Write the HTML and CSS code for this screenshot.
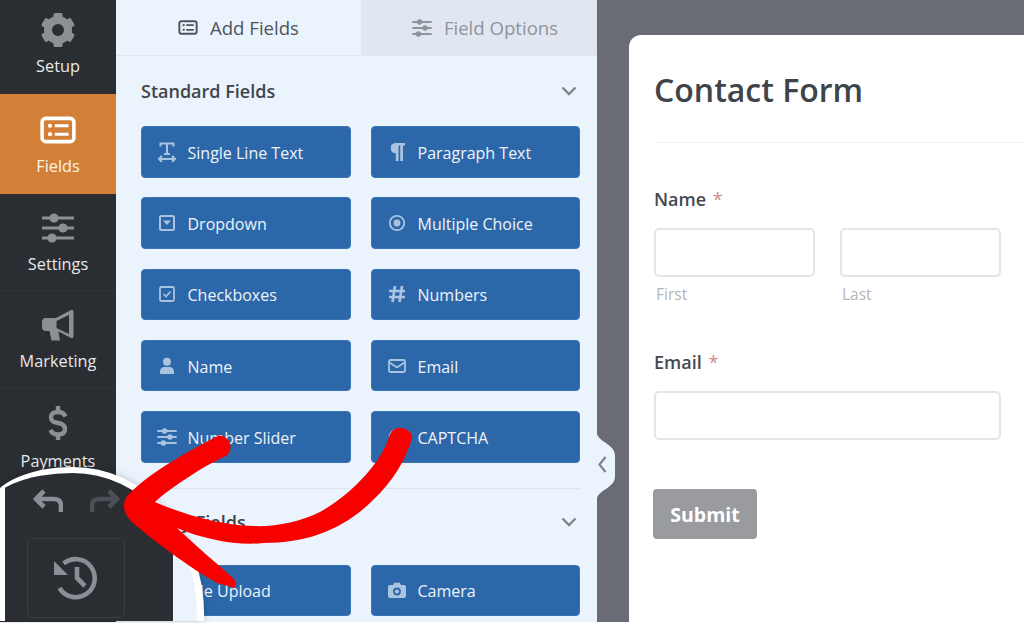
FILE: index.html
```html
<!DOCTYPE html>
<html lang="en">
<head>
  <meta charset="UTF-8">
  <meta name="viewport" content="width=device-width, initial-scale=1.0">
  <title>Contact Form - Fields</title>
  <link rel="stylesheet" href="styles.css">
</head>
<body>

<svg class="defs" width="0" height="0" aria-hidden="true">
  <symbol id="i-fields" viewBox="0 0 34 26">
    <rect x="2" y="2" width="30" height="22" rx="3.5" fill="none" stroke="currentColor" stroke-width="3.4"/>
    <circle cx="9.5" cy="9" r="2" fill="currentColor"/>
    <circle cx="9.5" cy="17" r="2" fill="currentColor"/>
    <path d="M14 9H27M14 17H27" stroke="currentColor" stroke-width="3" fill="none"/>
  </symbol>
  <symbol id="i-sliders" viewBox="0 0 32 30">
    <path d="M1 5H31M1 15H31M1 25H31" stroke="currentColor" stroke-width="3.2" stroke-linecap="round"/>
    <circle cx="12" cy="5" r="4.6" fill="currentColor"/>
    <circle cx="21" cy="15" r="4.6" fill="currentColor"/>
    <circle cx="10" cy="25" r="4.6" fill="currentColor"/>
  </symbol>
</svg>

<div class="app">
  <nav class="sidebar">
    <a class="nav-item nav-setup">
      <svg class="nav-icon" width="34" height="36" viewBox="-17 -18 34 36">
        <circle r="10" fill="none" stroke="currentColor" stroke-width="8"/>
        <g fill="currentColor">
          <rect x="-4.5" y="-17" width="9" height="7" rx="1.5"/>
          <rect x="-4.5" y="-17" width="9" height="7" rx="1.5" transform="rotate(60)"/>
          <rect x="-4.5" y="-17" width="9" height="7" rx="1.5" transform="rotate(120)"/>
          <rect x="-4.5" y="-17" width="9" height="7" rx="1.5" transform="rotate(180)"/>
          <rect x="-4.5" y="-17" width="9" height="7" rx="1.5" transform="rotate(240)"/>
          <rect x="-4.5" y="-17" width="9" height="7" rx="1.5" transform="rotate(300)"/>
        </g>
      </svg>
      <span>Setup</span>
    </a>
    <a class="nav-item nav-active">
      <svg class="nav-icon" width="36" height="36"><use href="#i-fields" y="4" width="36" height="28"/></svg>
      <span>Fields</span>
    </a>
    <a class="nav-item">
      <svg class="nav-icon" width="32" height="36"><use href="#i-sliders" y="3" width="32" height="30"/></svg>
      <span>Settings</span>
    </a>
    <a class="nav-item">
      <svg class="nav-icon" width="32" height="36" viewBox="0 -2 32 36">
        <path fill="currentColor" fill-rule="evenodd" d="M4 9H14L28.5 1.2A1.8 1.8 0 0 1 31.5 2.5V27.5A1.8 1.8 0 0 1 28.5 28.8L16.5 22.5L18 31.5H9.5L7.5 22H4A4 4 0 0 1 0 18V13A4 4 0 0 1 4 9ZM14.5 12V19L27 25V6Z"/>
      </svg>
      <span>Marketing</span>
    </a>
    <a class="nav-item nav-pay">
      <svg class="nav-icon" width="20" height="36" viewBox="0 0 20 36">
        <path fill="none" stroke="currentColor" stroke-width="4.4" d="M17.5 11.5Q15.5 7 10 7Q3 7 3 12.5Q3 17 10 18Q17 19 17 24Q17 29.5 10 29.5Q4.5 29.5 2.5 25M10 1V7M10 29V35"/>
      </svg>
      <span>Payments</span>
    </a>
  </nav>

  <section class="panel">
    <div class="tabs">
      <div class="tab tab-add">
        <svg width="20" height="15"><use href="#i-fields" width="20" height="15"/></svg>
        <span>Add Fields</span>
      </div>
      <div class="tab tab-options">
        <svg width="20" height="18"><use href="#i-sliders" width="20" height="18"/></svg>
        <span>Field Options</span>
      </div>
    </div>

    <div class="fields">
      <div class="group-head">
        <h2>Standard Fields</h2>
        <svg class="chev" width="16" height="10" viewBox="0 0 16 10"><path d="M1.5 1.5L8 8L14.5 1.5" fill="none" stroke="currentColor" stroke-width="2.4"/></svg>
      </div>
      <div class="field-grid">
        <button class="field-btn">
          <svg width="18" height="20" viewBox="0 0 18 20"><path d="M2.5 4.5V1.5H15.5V4.5M9 1.5V12M6 12H12M1 17H17M4 14L1 17L4 20M14 14L17 17L14 20" fill="none" stroke="currentColor" stroke-width="2"/></svg>
          <span>Single Line Text</span>
        </button>
        <button class="field-btn">
          <svg width="18" height="20" viewBox="0 0 18 20"><path d="M7 1H17V3.5H15V19H12.2V3.5H10.6V19H7.8V11.5A5.3 5.3 0 0 1 7 1Z" fill="currentColor"/></svg>
          <span>Paragraph Text</span>
        </button>
        <button class="field-btn">
          <svg width="18" height="18" viewBox="0 0 18 18"><rect x="2" y="2" width="14" height="14" rx="1.5" fill="none" stroke="currentColor" stroke-width="2"/><path d="M5 6.5H13L9 11Z" fill="currentColor"/></svg>
          <span>Dropdown</span>
        </button>
        <button class="field-btn">
          <svg width="18" height="18" viewBox="0 0 18 18"><circle cx="9" cy="9" r="7.2" fill="none" stroke="currentColor" stroke-width="1.8"/><circle cx="9" cy="9" r="3.4" fill="currentColor"/></svg>
          <span>Multiple Choice</span>
        </button>
        <button class="field-btn">
          <svg width="18" height="18" viewBox="0 0 18 18"><rect x="2" y="2" width="14" height="14" rx="1.5" fill="none" stroke="currentColor" stroke-width="1.8"/><path d="M5.5 9L8 11.5L12.5 6.5" fill="none" stroke="currentColor" stroke-width="1.7"/></svg>
          <span>Checkboxes</span>
        </button>
        <button class="field-btn">
          <svg width="18" height="20" viewBox="0 0 18 20"><path d="M7 2L4.5 18M14 2L11.5 18M1 7H17M1 13H17" fill="none" stroke="currentColor" stroke-width="2.7"/></svg>
          <span>Numbers</span>
        </button>
        <button class="field-btn">
          <svg width="18" height="18" viewBox="0 0 18 18"><circle cx="9" cy="4.8" r="4" fill="currentColor"/><path d="M2 17V14.5A4.5 4.5 0 0 1 6.5 10H11.5A4.5 4.5 0 0 1 16 14.5V17Z" fill="currentColor"/></svg>
          <span>Name</span>
        </button>
        <button class="field-btn">
          <svg width="18" height="14" viewBox="0 0 18 14"><rect x="1" y="1" width="16" height="12" rx="1.5" fill="none" stroke="currentColor" stroke-width="1.8"/><path d="M1.5 3.5L9 8.5L16.5 3.5" fill="none" stroke="currentColor" stroke-width="1.8"/></svg>
          <span>Email</span>
        </button>
        <button class="field-btn">
          <svg width="20" height="18"><use href="#i-sliders" width="20" height="18"/></svg>
          <span>Number Slider</span>
        </button>
        <button class="field-btn">
          <svg width="18" height="18" viewBox="0 0 18 18"><circle cx="9" cy="9" r="7.2" fill="none" stroke="currentColor" stroke-width="2"/></svg>
          <span>CAPTCHA</span>
        </button>
      </div>

      <div class="group-head group-fancy">
        <h2>Fancy Fields</h2>
        <svg class="chev" width="16" height="10" viewBox="0 0 16 10"><path d="M1.5 1.5L8 8L14.5 1.5" fill="none" stroke="currentColor" stroke-width="2.4"/></svg>
      </div>
      <div class="field-grid">
        <button class="field-btn">
          <svg width="18" height="18" viewBox="0 0 18 18"><path d="M2 11V16H16V11M9 12V3M5.5 6L9 2.5L12.5 6" fill="none" stroke="currentColor" stroke-width="2"/></svg>
          <span>File Upload</span>
        </button>
        <button class="field-btn">
          <svg width="18" height="16" viewBox="0 0 18 16"><path fill="currentColor" fill-rule="evenodd" d="M2 3H5L6.2 .8H11.8L13 3H16A2 2 0 0 1 18 5V14A2 2 0 0 1 16 16H2A2 2 0 0 1 0 14V5A2 2 0 0 1 2 3ZM9 5.6A3.9 3.9 0 1 0 9 13.4A3.9 3.9 0 1 0 9 5.6Z"/><circle cx="9" cy="9.5" r="2.1" fill="currentColor"/></svg>
          <span>Camera</span>
        </button>
      </div>
    </div>
  </section>

  <main class="preview">
    <svg class="collapse" width="20" height="64" viewBox="0 0 20 64">
      <path d="M0 0C3 9 18 10 18 22V42C18 54 3 55 0 64Z" fill="#ebf3fc"/>
      <path d="M8.5 23L2.5 30.5L8.5 38" fill="none" stroke="#7d838b" stroke-width="2.2"/>
    </svg>
    <div class="card">
      <h1>Contact Form</h1>
      <hr class="card-rule">
      <form class="form">
        <div class="form-row">
          <label class="form-label">Name <em>*</em></label>
          <div class="name-inputs">
            <div class="sub-field">
              <input class="text-input" type="text">
              <small>First</small>
            </div>
            <div class="sub-field">
              <input class="text-input" type="text">
              <small>Last</small>
            </div>
          </div>
        </div>
        <div class="form-row row-email">
          <label class="form-label">Email <em>*</em></label>
          <input class="text-input" type="text">
        </div>
        <button class="submit" type="button">Submit</button>
      </form>
    </div>
  </main>
</div>

<!-- magnified corner with the undo / redo / revisions buttons -->
<div class="lens">
  <div class="lens-rail">
    <div class="undo-row">
      <svg width="30" height="24" viewBox="0 0 30 24"><path d="M11 3L3 11L11 19M3 11H21Q28 11 28 18V24" fill="none" stroke="currentColor" stroke-width="4.6"/></svg>
      <svg class="redo" width="30" height="24" viewBox="0 0 30 24"><path d="M19 3L27 11L19 19M27 11H9Q2 11 2 18V24" fill="none" stroke="currentColor" stroke-width="4.6"/></svg>
    </div>
    <div class="history">
      <svg width="48" height="48" viewBox="0 0 48 48"><path d="M10.6 10.6A19 19 0 1 1 6.5 35M24 14V25L32 33" fill="none" stroke="currentColor" stroke-width="4.6"/><path d="M1 8L15 22H1Z" fill="currentColor"/></svg>
    </div>
  </div>
</div>

<svg class="arrow" width="1024" height="623" viewBox="0 0 1024 623" aria-hidden="true">
  <path fill="#f70000" d="M218 436C190 450 150 472 128 495C122 502 122 512 132 522C150 538 190 568 217 583L235 588C236 583 236 582 233 578C215 562 195 545 177 528C205 540 240 546 263 543C310 543 345 528 373 500C392 482 405 462 412 438C413 432 404 427 398 428C392 429 391 432 388 440C380 462 355 492 320 512C300 522 275 527 253 526C220 525 185 515 155 502C170 488 205 465 226 456C232 452 232 442 226 438C223 436 220 435 218 436Z"/>
</svg>

</body>
</html>
```

FILE: styles.css
```css
* {
    box-sizing: border-box;
}
html, body {
    margin: 0;
    height: 623px;
    overflow: hidden;
    background-color: #fff;
}
body {
    font-family: "Open Sans", "Noto Sans", sans-serif;
    position: relative;
}
.defs {
    position: absolute;
}
.app {
    display: flex;
    height: 622px;
    overflow: hidden;
}

/* left nav */
.sidebar {
    width: 116px;
    flex-shrink: 0;
    background-color: #2a2d32;
    display: flex;
    flex-direction: column;
}
.nav-item {
    display: flex;
    flex-direction: column;
    align-items: center;
    height: 97px;
    padding-top: 16px;
    color: #e8e9ea;
    font-size: 16.3px;
    line-height: 22px;
    border-bottom: 1px solid #32353a;
}
.nav-icon {
    color: #8d8f95;
    margin-bottom: 7px;
    display: block;
}
.nav-setup {
    height: 94px;
    padding-top: 12px;
    border-bottom: 0;
}
.nav-active {
    height: 100px;
    padding-top: 18px;
    background-color: #d27f38;
    color: #fdf3e8;
    border-bottom: 0;
}
.nav-active .nav-icon {
    color: #fff;
}
.nav-pay {
    padding-top: 17px;
    border-bottom: 0;
}
.nav-pay .nav-icon {
    margin-bottom: 9px;
}

/* fields panel */
.panel {
    width: 481px;
    flex-shrink: 0;
    background-color: #ebf3fc;
}
.tabs {
    display: flex;
    height: 56px;
    font-size: 18.6px;
}
.tab {
    display: flex;
    align-items: center;
    justify-content: center;
    gap: 12px;
    border-bottom: 1px solid #dfe6ee;
}
.tab-add {
    width: 245px;
    color: #50555c;
}
.tab-options {
    width: 236px;
    padding-left: 12px;
    color: #8f949c;
    background-color: #e0e7f0;
}
.fields {
    padding: 0 17px 0 25px;
}
.group-head {
    display: flex;
    align-items: center;
    justify-content: space-between;
    height: 70px;
    padding-right: 3px;
}
.group-head h2 {
    margin: 0;
    font-size: 18px;
    font-weight: 600;
    color: #40454c;
}
.chev {
    color: #7f858c;
}
.group-fancy {
    margin-top: 25px;
    padding-bottom: 9px;
    height: 77px;
    border-top: 1px solid #dce3eb;
}
.field-grid {
    display: grid;
    grid-template-columns: 210px 209px;
    column-gap: 20px;
    row-gap: 19.8px;
}
.field-btn {
    display: flex;
    align-items: center;
    gap: 10.5px;
    height: 51.5px;
    padding: 2px 0 0 15px;
    border: 1px solid #3a76b6;
    border-radius: 4px;
    background-color: #2c68a9;
    color: #a9c3e0;
    font-family: inherit;
    font-size: 16px;
    text-align: left;
}
.field-btn svg {
    width: 20px;
    flex-shrink: 0;
    margin-top: -2px;
}
.field-btn span {
    color: #eef3f9;
}

/* form preview */
.preview {
    flex: 1;
    position: relative;
    background-color: #696c74;
    padding: 35px 0 0 32px;
}
.collapse {
    position: absolute;
    left: 0;
    top: 434px;
}
.card {
    width: 500px;
    height: 600px;
    background-color: #fff;
    border-top-left-radius: 12px;
    padding: 30px 0 0 25px;
}
.card h1 {
    margin: 0;
    font-size: 32px;
    line-height: 50px;
    font-weight: 600;
    color: #3f444a;
}
.card-rule {
    margin: 27px 0 0;
    border: 0;
    border-top: 1px solid #eeeff0;
}
.form {
    width: 347px;
    padding-top: 43px;
}
.form-label {
    display: block;
    font-size: 18px;
    line-height: 26px;
    font-weight: 600;
    color: #45494f;
    margin-bottom: 16px;
}
.form-label em {
    font-style: normal;
    font-weight: 400;
    color: #cf8b8b;
    margin-left: 2px;
}
.name-inputs {
    display: flex;
    gap: 25px;
}
.sub-field {
    width: 161px;
}
.sub-field small {
    display: block;
    margin-top: 6px;
    padding-left: 2px;
    font-size: 15.5px;
    line-height: 22px;
    color: #b4b5b6;
}
.text-input {
    display: block;
    width: 100%;
    height: 49px;
    border: 2px solid #e4e5e7;
    border-radius: 5px;
    background-color: #fff;
}
.row-email {
    margin-top: 44px;
}
.submit {
    display: block;
    margin: 49px 0 0 -1px;
    width: 104px;
    height: 50px;
    border: 0;
    border-radius: 4px;
    background-color: #999b9f;
    color: #fff;
    font-family: inherit;
    font-size: 19.5px;
    font-weight: 700;
}

/* zoomed-in corner on top of everything, its left end runs off the page */
.lens {
    position: absolute;
    left: -12px;
    top: 467px;
    width: 216px;
    height: 154px;
    border: solid #fff;
    border-width: 6px 7px 0 0;
    border-radius: 85px 131px 0 0 / 43px 146px 0 0;
    background-color: #ebf3fc;
    box-shadow: 0 0 8px rgba(0, 0, 0, 0.2);
    overflow: hidden;
}
.lens-rail {
    width: 168px;
    height: 100%;
    margin-left: 17px;
    background-color: #2a2d32;
    box-shadow: -17px 0 0 #fff;
    padding: 15px 0 0 22px;
}
.undo-row {
    display: flex;
    gap: 27px;
    padding-left: 6px;
    color: #8b8e95;
}
.redo {
    color: #4c4f55;
}
.history {
    display: flex;
    align-items: center;
    justify-content: center;
    width: 98px;
    height: 80px;
    margin-top: 26px;
    padding: 0 0 3px 2px;
    border: 1px solid #3a3d42;
    border-radius: 6px;
    color: #8b8e95;
}
.arrow {
    position: absolute;
    left: 0;
    top: 0;
}
```
